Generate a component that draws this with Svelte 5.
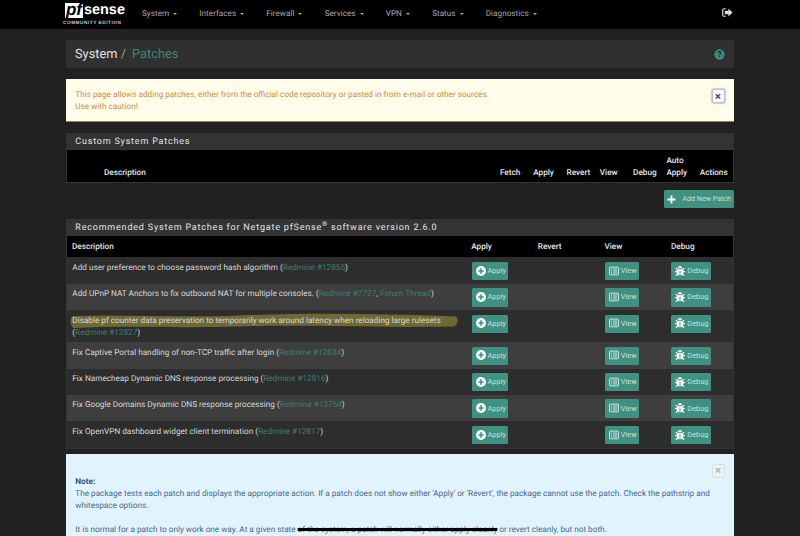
<script lang="ts">
    interface Patch {
        text: string;
        links: string[];
    }

    const navItems = ['System', 'Interfaces', 'Firewall', 'Services', 'VPN', 'Status', 'Diagnostics'];

    const customColumns = ['', 'Description', 'Fetch', 'Apply', 'Revert', 'View', 'Debug', 'Auto Apply', 'Actions'];

    const patches: Patch[] = [
        { text: 'Add user preference to choose password hash algorithm', links: ['Redmine #12855'] },
        { text: 'Add UPnP NAT Anchors to fix outbound NAT for multiple consoles.', links: ['Redmine #7727', 'Forum Thread'] },
        { text: 'Disable pf counter data preservation to temporarily work around latency when reloading large rulesets', links: ['Redmine #12827'] },
        { text: 'Fix Captive Portal handling of non-TCP traffic after login', links: ['Redmine #12834'] },
        { text: 'Fix Namecheap Dynamic DNS response processing', links: ['Redmine #12816'] },
        { text: 'Fix Google Domains Dynamic DNS response processing', links: ['Redmine #12754'] },
        { text: 'Fix OpenVPN dashboard widget client termination', links: ['Redmine #12817'] }
    ];

    const bugPath = 'M511.988 288.9c-.478 17.43-15.217 31.1-32.653 31.1H424v16c0 21.864-4.882 42.584-13.6 61.145l60.228 60.228c12.496 12.497 12.496 32.758 0 45.255-12.498 12.497-32.759 12.496-45.256 0l-54.736-54.736C345.886 467.965 314.351 480 280 480V236c0-6.627-5.373-12-12-12h-24c-6.627 0-12 5.373-12 12v244c-34.351 0-65.886-12.035-90.636-32.108l-54.736 54.736c-12.497 12.497-32.758 12.496-45.256 0-12.496-12.497-12.496-32.758 0-45.255l60.228-60.228C92.882 378.584 88 357.864 88 336v-16H32.666C15.23 320 .491 306.33.013 288.9-.484 270.816 14.028 256 32 256h56v-58.745l-46.628-46.628c-12.496-12.497-12.496-32.758 0-45.255 12.498-12.497 32.758-12.497 45.256 0L141.255 160h229.489l54.627-54.627c12.498-12.497 32.758-12.497 45.256 0 12.496 12.497 12.496 32.758 0 45.255L424 197.255V256h56c17.972 0 32.484 14.816 31.988 32.9zM257 0c-61.856 0-112 50.144-112 112h224C369 50.144 318.856 0 257 0z';
</script>

{#snippet plusCircle()}
    <svg class="ico" viewBox="0 0 12 12">
        <circle cx="6" cy="6" r="6" fill="#fff" />
        <path d="M6 2.8v6.4M2.8 6h6.4" stroke="#3f9282" stroke-width="1.9" />
    </svg>
{/snippet}

{#snippet listAlt()}
    <svg class="ico" viewBox="0 0 13 12">
        <rect x="0.6" y="1" width="11.8" height="10" rx="1.2" fill="none" stroke="#fff" stroke-width="1" />
        <path d="M2.4 3.5h1.4M2.4 6h1.4M2.4 8.5h1.4M5 3.5h5.8M5 6h5.8M5 8.5h5.8" stroke="#fff" stroke-width="1" />
    </svg>
{/snippet}

{#snippet bug()}
    <svg class="ico" viewBox="0 0 512 512">
        <path d={bugPath} fill="#fff" />
    </svg>
{/snippet}

<div class="page">
    <nav class="navbar">
        <div class="logo">
            <div class="logo-top">
                <span class="logo-pf">pf</span><span class="logo-sense">sense</span>
            </div>
            <div class="logo-sub">COMMUNITY EDITION</div>
        </div>
        <ul class="menu">
            {#each navItems as item}
                <li>{item}<span class="caret"></span></li>
            {/each}
        </ul>
        <svg class="logout" viewBox="0 0 12 10">
            <path d="M4 0.8H2A1.3 1.3 0 0 0 0.7 2.1v5.8A1.3 1.3 0 0 0 2 9.2h2" fill="none" stroke="#ddd" stroke-width="1.3" />
            <path d="M7 0.6 11.6 5 7 9.4V7H3V3h4z" fill="#ddd" />
        </svg>
    </nav>

    <main class="container">
        <header class="title-bar">
            <h1>System <span class="slash">/</span> <span class="current">Patches</span></h1>
            <svg class="help" viewBox="0 0 12 12">
                <circle cx="6" cy="6" r="5.6" fill="#3a8a7e" />
                <text x="6" y="9" text-anchor="middle">?</text>
            </svg>
        </header>

        <div class="alert warning">
            <button class="close" aria-label="Close">×</button>
            This page allows adding patches, either from the official code repository or pasted in from e-mail or other sources.<br />
            Use with caution!
        </div>

        <section class="panel">
            <h2>Custom System Patches</h2>
            <div class="custom-head">
                {#each customColumns as col}
                    <div>{col}</div>
                {/each}
            </div>
        </section>

        <div class="add-row">
            <button class="btn add">
                <svg class="ico plus" viewBox="0 0 10 10">
                    <path d="M5 0.5v9M0.5 5h9" stroke="#fff" stroke-width="2" />
                </svg>
                Add New Patch
            </button>
        </div>

        <section class="panel">
            <h2>Recommended System Patches for Netgate pfSense<sup>®</sup> software version 2.6.0</h2>
            <div class="row head">
                <div>Description</div>
                <div>Apply</div>
                <div>Revert</div>
                <div>View</div>
                <div>Debug</div>
            </div>
            {#each patches as patch, i}
                <div class="row patch">
                    <div class="desc">
                        {#if i === 2}
                            <svg class="marker" viewBox="0 0 392 18" preserveAspectRatio="none">
                                <path d="M3 4C60 2 110 6 170 3.5S300 1 388 4.5C391 8 390 12 386 14.5C300 16 240 12.5 170 14.5S60 13 4 16C1 12 1 8 3 4z" fill="#6e6833" />
                            </svg>
                        {/if}
                        <span class="desc-text">{patch.text} ({#each patch.links as link, j}{#if j > 0}{', '}{/if}<span class="link">{link}</span>{/each})</span>
                    </div>
                    <div><button class="btn">{@render plusCircle()}Apply</button></div>
                    <div></div>
                    <div><button class="btn">{@render listAlt()}View</button></div>
                    <div><button class="btn">{@render bug()}Debug</button></div>
                </div>
            {/each}
        </section>

        <div class="alert info">
            <button class="close faded" aria-label="Close">×</button>
            <br />
            <strong>Note:</strong><br />
            The package tests each patch and displays the appropriate action. If a patch does not show either 'Apply' or 'Revert', the package cannot use the patch. Check the pathstrip and whitespace options.<br />
            <br />
            It is normal for a patch to only work one way. At a given state <span class="scribble">of the system, a patch will normally either apply cleanly</span> or revert cleanly, but not both.
        </div>
    </main>
</div>

<style>
    :global(body) {
        margin: 0;
        background: #212121;
    }

    .page {
        height: 536px;
        overflow: hidden;
        background: #212121;
        font-family: Roboto, 'Liberation Sans', sans-serif;
        font-size: 8.2px;
        line-height: 12px;
        color: #d8d8d8;
        text-rendering: geometricPrecision;
    }

    .navbar {
        display: flex;
        align-items: center;
        height: 28.5px;
        padding: 0 67px 0 63px;
        background: #000;
    }

    .logo {
        width: 62px;
        margin-right: 17px;
        color: #fff;
    }

    .logo-top {
        display: flex;
        align-items: center;
        height: 16px;
    }

    .logo-pf {
        width: 19px;
        height: 15px;
        margin-left: 2px;
        background: #fff;
        color: #000;
        font: italic 700 17px/14px 'Liberation Sans', sans-serif;
        text-align: center;
    }

    .logo-sense {
        margin-left: 1px;
        font: 700 14.5px/15px 'Liberation Sans', sans-serif;
    }

    .logo-sub {
        margin-top: 1px;
        font: 700 4.7px/6px 'Liberation Sans', sans-serif;
        letter-spacing: 0.55px;
        color: #ccc;
        white-space: nowrap;
    }

    .menu {
        display: flex;
        flex: 1;
        gap: 22.2px;
        margin: 0;
        padding: 0;
        list-style: none;
        color: #a8a8a8;
    }

    .caret {
        display: inline-block;
        margin-left: 4px;
        vertical-align: middle;
        border-top: 2.5px solid #a8a8a8;
        border-left: 2.5px solid transparent;
        border-right: 2.5px solid transparent;
    }

    .logout {
        width: 11px;
        height: 9px;
        margin-top: -4px;
    }

    .container {
        width: 668px;
        margin: 0 auto;
        padding-top: 11.5px;
    }

    .title-bar {
        display: flex;
        align-items: center;
        justify-content: space-between;
        height: 28px;
        padding: 0 9px;
        background: #303030;
    }

    h1 {
        margin: 2px 0 0;
        font-size: 12.8px;
        font-weight: 400;
        color: #e0e0e0;
    }

    .slash {
        color: #999;
    }

    .current {
        margin-left: 3px;
        color: #3f8578;
    }

    .help {
        width: 11px;
        height: 11px;
    }

    .help text {
        font: 700 9px Roboto, sans-serif;
        fill: #212121;
    }

    .alert {
        position: relative;
        padding: 10.3px 9.3px 8.3px;
    }

    .warning {
        margin: 11px 0;
        padding-bottom: 7.7px;
        background: #fffdea;
        border-bottom: 1px solid #8c8860;
        color: #d6883e;
    }

    .info {
        margin-top: 5px;
        background: #e1f3fc;
        color: #44688f;
    }

    .info strong {
        color: #2d5688;
    }

    .scribble {
        text-decoration: line-through;
        text-decoration-color: #000;
        text-decoration-thickness: 2.5px;
    }

    .close {
        position: absolute;
        top: 10px;
        right: 9.5px;
        width: 13px;
        height: 14px;
        padding: 0;
        border: 1px solid #b9c4cc;
        border-radius: 2px;
        background: #fbfbf8;
        box-shadow: 0 0 1px 1px #c4d0d8;
        color: #444;
        font: 700 11px/11px Roboto, sans-serif;
    }

    .close.faded {
        border-color: #d3dfe6;
        box-shadow: none;
        background: #e8f3f8;
        color: #aab4bc;
    }

    .panel {
        padding: 0 1px 1px;
        background: #333;
    }

    h2 {
        margin: 0;
        padding: 1px 0 0 8.3px;
        font-size: 9px;
        line-height: 16px;
        font-weight: 400;
        letter-spacing: 0.8px;
        color: #e2e2e2;
    }

    sup {
        font-size: 6.5px;
        line-height: 0;
    }

    .custom-head {
        display: grid;
        grid-template-columns: 37px 1fr repeat(7, 33.3px);
        align-items: end;
        height: 24px;
        padding: 5px 0 3px;
        background: #000;
        color: #e6e6e6;
        font-weight: 500;
    }

    .row {
        display: grid;
        grid-template-columns: 1fr 66.6px 66.6px 66.6px 67px;
    }

    .head {
        padding: 4.5px 0 3.5px;
        background: #000;
        color: #e6e6e6;
        font-weight: 500;
    }

    .head > div {
        height: 13px;
        padding-left: 5px;
    }

    .patch {
        background: #2d2d2d;
    }

    .patch:nth-child(even) {
        background: #3e3e3e;
    }

    .patch > div {
        position: relative;
        padding: 4.5px 5.3px 3.5px;
    }

    .marker {
        position: absolute;
        top: 2px;
        left: 2px;
        width: 391px;
        height: 18px;
    }

    .desc-text {
        position: relative;
    }

    .link {
        color: #3d7f74;
    }

    .btn {
        display: flex;
        align-items: center;
        gap: 2px;
        width: fit-content;
        height: 18.4px;
        margin: 0;
        padding: 0 2.5px 0 4px;
        border: 0;
        border-radius: 1.5px;
        background: #3f9282;
        color: #c4e0da;
        font: 400 7.4px/12px Roboto, sans-serif;
    }

    .ico {
        width: 10px;
        height: 10px;
        margin-top: -1px;
    }

    .add-row {
        display: flex;
        justify-content: flex-end;
        margin: 7px 0 11px;
    }

    .add {
        gap: 6px;
        padding: 0 3px;
        font-size: 7.1px;
    }

    .plus {
        width: 9px;
        height: 9px;
        margin: 0;
    }
</style>
